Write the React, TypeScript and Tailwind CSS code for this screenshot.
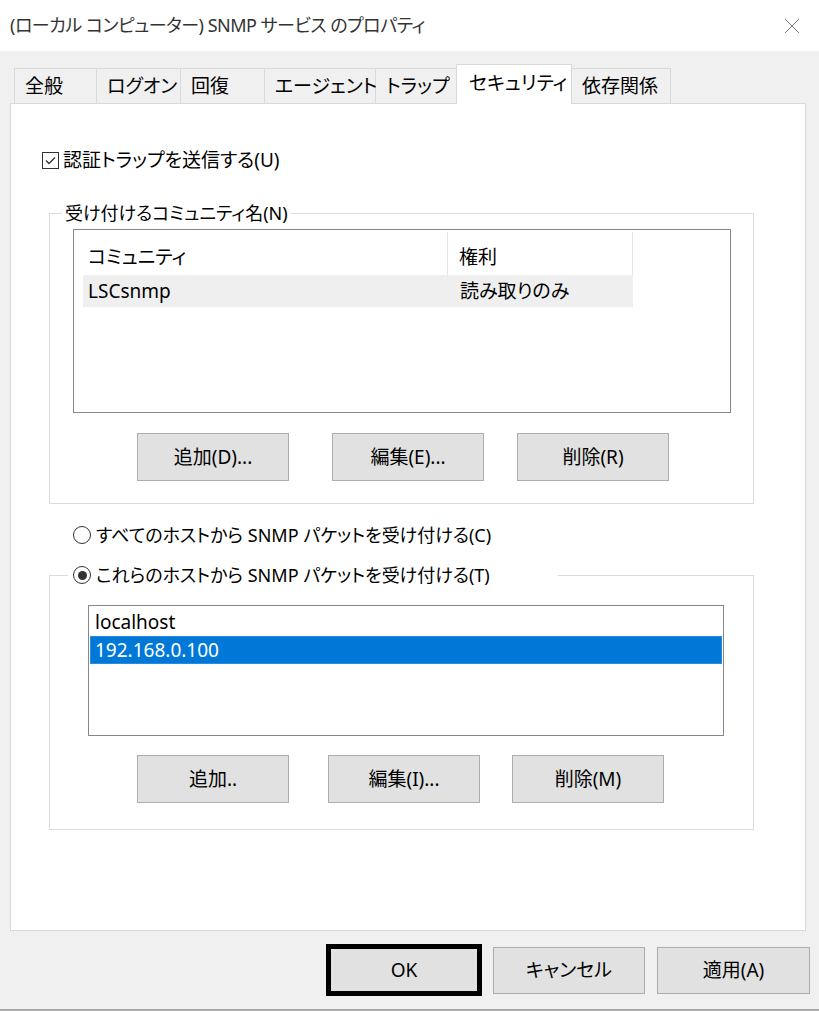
import React from 'react';

const tabs = ['全般', 'ログオン', '回復', 'エージェント', 'トラップ', 'セキュリティ', '依存関係'];
const tabWidths = ['w-[83px]', 'w-[84px]', 'w-[84px]', 'w-[111px]', 'w-[81px]', 'w-[116px]', 'w-[100px]'];

function Btn({ label, w = 'w-[152px]', className = '' }: { label: string; w?: string; className?: string }) {
  return (
    <div
      className={`${w} h-[48px] flex items-center justify-center bg-[#e1e1e1] border border-[#adadad] text-[19px] text-black ${className}`}
    >
      {label}
    </div>
  );
}

function Radio({ checked }: { checked?: boolean }) {
  return (
    <span className="w-[18px] h-[18px] rounded-full border border-[#333] flex items-center justify-center bg-white shrink-0">
      {checked && <span className="w-[9px] h-[9px] rounded-full bg-[#333]" />}
    </span>
  );
}

export default function App() {
  return (
    <div
      className="w-[819px] h-[1011px] flex flex-col bg-[#f0f0f0] text-black overflow-hidden [font-feature-settings:'palt']"
      style={{ fontFamily: '"Noto Sans", "Noto Sans CJK JP", sans-serif' }}
    >
      {/* タイトルバー */}
      <div className="h-[51px] shrink-0 bg-white flex items-center justify-between pl-[10px] pr-[19px]">
        <span className="text-[18px] text-[#333] tracking-[-0.5px]">(ローカル コンピューター) SNMP サービス のプロパティ</span>
        <svg width="16" height="16" viewBox="0 0 16 16">
          <path d="M1 1 L15 15 M15 1 L1 15" stroke="#777" strokeWidth="1" fill="none" />
        </svg>
      </div>

      {/* タブ */}
      <div className="flex items-end pl-[14px] pt-[13px] h-[52px] shrink-0 relative z-10 whitespace-nowrap">
        {tabs.map((t, i) =>
          i === 5 ? (
            <div
              key={t}
              className={`${tabWidths[i]} h-[40px] bg-white border border-[#d9d9d9] border-b-0 flex items-center pl-[12px] pb-[2px] text-[19px] -mb-px -ml-px`}
            >
              {t}
            </div>
          ) : (
            <div
              key={t}
              className={`${tabWidths[i]} h-[35px] border-t border-r border-[#d9d9d9] ${i === 0 ? 'border-l' : ''} ${i === 6 ? '-ml-px border-l' : ''} flex items-center pl-[10px] text-[19px]`}
            >
              {t}
            </div>
          )
        )}
      </div>

      {/* パネル */}
      <div className="ml-[10px] w-[796px] h-[828px] shrink-0 bg-white border border-[#d9d9d9] flex flex-col text-[19px]">
        <div className="flex items-center h-[24px] mt-[44px] ml-[31px]">
          <span className="w-[17px] h-[17px] border border-[#333] flex items-center justify-center">
            <svg width="13" height="13" viewBox="0 0 13 13">
              <path d="M2 6.5 L5 9.5 L11 3.5" stroke="#333" strokeWidth="1.3" fill="none" />
            </svg>
          </span>
          <span className="ml-[4px]">認証トラップを送信する(U)</span>
        </div>

        <fieldset className="ml-[38px] mt-[29px] w-[705px] h-[303px] border border-[#dcdcdc] pb-[22px]">
          <legend className="ml-[12px] px-[3px] h-[24px] leading-[24px] text-[18px]">受け付けるコミュニティ名(N)</legend>
          <div className="ml-[23px] mt-[4px] w-[658px] h-[184px] border border-[#828790] flex flex-col pt-[2px]">
            <div className="flex h-[43px] ml-[9px]">
              <div className="w-[365px] border-r border-[#e5e5e5] flex items-center pl-[5px] pt-[8px]">コミュニティ</div>
              <div className="w-[185px] border-r border-[#e5e5e5] flex items-center pl-[11px] pt-[8px]">権利</div>
            </div>
            <div className="flex h-[32px] ml-[9px] w-[550px] bg-[#efefef]">
              <div className="w-[365px] flex items-center pl-[5px]">LSCsnmp</div>
              <div className="w-[185px] flex items-center pl-[12px]">読み取りのみ</div>
            </div>
          </div>
          <div className="flex mt-[20px] ml-[87px]">
            <Btn label="追加(D)..." />
            <Btn label="編集(E)..." className="ml-[43px]" />
            <Btn label="削除(R)" className="ml-[33px]" />
          </div>
        </fieldset>

        <div className="flex items-center h-[24px] mt-[19px] ml-[62px] text-[18px]">
          <Radio />
          <span className="ml-[5px]">すべてのホストから SNMP パケットを受け付ける(C)</span>
        </div>

        <fieldset className="ml-[38px] mt-[16px] w-[705px] h-[267px] border border-[#dcdcdc]">
          <legend className="ml-[18px] pl-[5px] w-[490px] h-[24px] flex items-center text-[18px]">
            <Radio checked />
            <span className="ml-[5px]">これらのホストから SNMP パケットを受け付ける(T)</span>
          </legend>
          <div className="ml-[38px] mt-[18px] w-[636px] h-[131px] border border-[#828790] pt-[2px] px-[1px]">
            <div className="h-[28px] flex items-center pl-[5px]">localhost</div>
            <div className="h-[28px] flex items-center pl-[4px] bg-[#0078d7] border border-[#2a8ce0] text-white">192.168.0.100</div>
          </div>
          <div className="flex mt-[19px] ml-[87px]">
            <Btn label="追加.." />
            <Btn label="編集(I)..." className="ml-[39px]" />
            <Btn label="削除(M)" className="ml-[32px]" />
          </div>
        </fieldset>
      </div>

      {/* 下部ボタン */}
      <div className="flex items-center justify-end pr-[9px] h-[78px] shrink-0 text-[19px]">
        <div className="w-[156px] h-[52px] border-[5px] border-black bg-[#e1e1e1] flex items-center justify-center">OK</div>
        <Btn label="キャンセル" w="w-[152px]" className="ml-[11px] !h-[47px]" />
        <Btn label="適用(A)" w="w-[153px]" className="ml-[12px] !h-[47px]" />
      </div>
      <div className="h-[2px] bg-[#a9a9a9] shrink-0" />
    </div>
  );
}
